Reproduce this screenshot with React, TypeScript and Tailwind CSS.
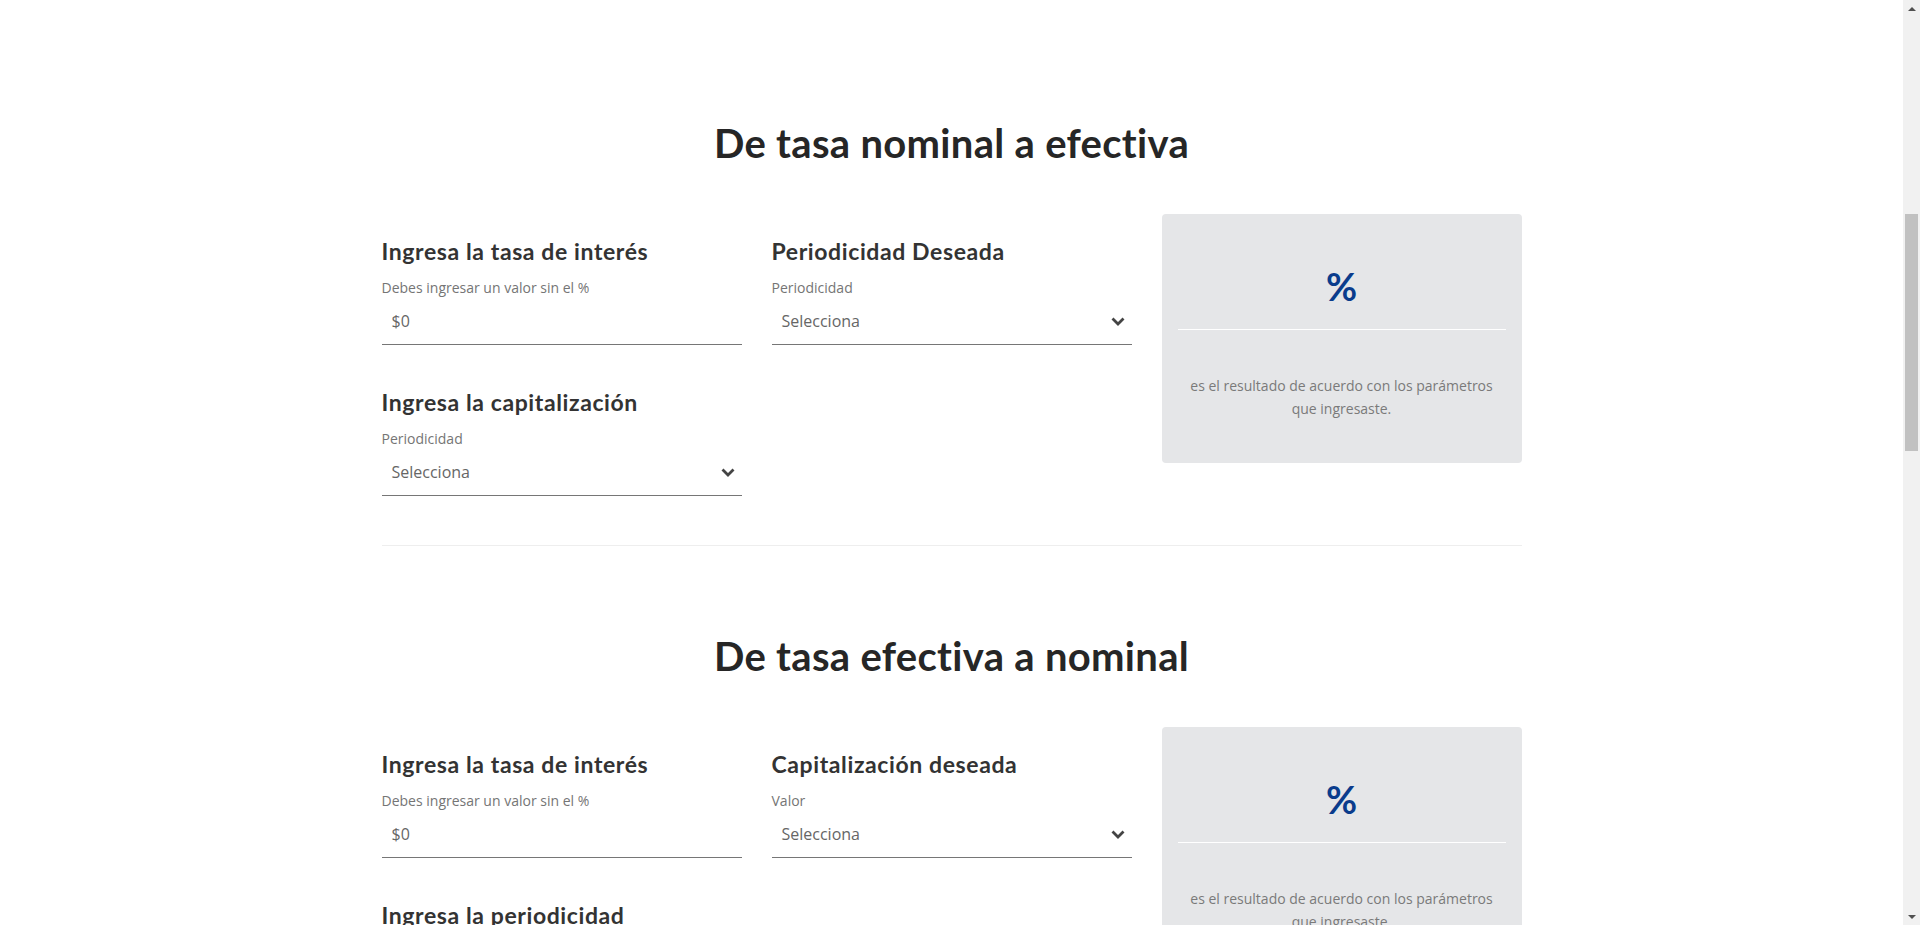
type Field = {
  label: string;
  helper: string;
  kind: "input" | "select";
};

type Section = {
  title: string;
  fields: Field[];
  side: Field;
};

const sections: Section[] = [
  {
    title: "De tasa nominal a efectiva",
    fields: [
      { label: "Ingresa la tasa de interés", helper: "Debes ingresar un valor sin el %", kind: "input" },
      { label: "Ingresa la capitalización", helper: "Periodicidad", kind: "select" },
    ],
    side: { label: "Periodicidad Deseada", helper: "Periodicidad", kind: "select" },
  },
  {
    title: "De tasa efectiva a nominal",
    fields: [
      { label: "Ingresa la tasa de interés", helper: "Debes ingresar un valor sin el %", kind: "input" },
      { label: "Ingresa la periodicidad", helper: "Periodicidad", kind: "select" },
    ],
    side: { label: "Capitalización deseada", helper: "Valor", kind: "select" },
  },
];

function Chevron() {
  return (
    <svg width="14" height="9" viewBox="0 0 14 9" className="text-[#444]">
      <path d="M1.5 1.5 L7 7 L12.5 1.5" fill="none" stroke="currentColor" strokeWidth="2.8" />
    </svg>
  );
}

function FieldBlock({ field }: { field: Field }) {
  return (
    <div className="flex flex-col">
      <h3 className="font-['Lato',sans-serif] text-[23px] font-bold leading-[28px] tracking-[0.6px] text-[#333]">
        {field.label}
      </h3>
      <p className="mt-[13px] font-['Open_Sans',sans-serif] text-[14px] leading-[20px] text-[#757575]">
        {field.helper}
      </p>
      <div className="flex h-[47px] items-center justify-between border-b border-[#767676] pl-[10px] pr-[7px] font-['Open_Sans',sans-serif] text-[16px] text-[#666]">
        <span>{field.kind === "input" ? "$0" : "Selecciona"}</span>
        {field.kind === "select" && <Chevron />}
      </div>
    </div>
  );
}

function ResultBox() {
  return (
    <div className="flex h-[249px] flex-col items-center rounded-[4px] bg-[#e5e6e8] px-4 pt-[48px]">
      <div className="font-['Lato',sans-serif] text-[38px] font-bold leading-[48px] text-[#0a3c8c]">%</div>
      <div className="mt-[19px] h-px w-full bg-white" />
      <p className="mt-[44px] text-center font-['Open_Sans',sans-serif] text-[14px] leading-[23px] text-[#7a7a7a]">
        es el resultado de acuerdo con los parámetros
        <br />
        que ingresaste.
      </p>
    </div>
  );
}

function Calculator({ section }: { section: Section }) {
  return (
    <section>
      <h2 className="text-center font-['Lato',sans-serif] text-[40px] font-bold leading-[48px] tracking-[0.3px] text-[#262626]">
        {section.title}
      </h2>
      <div className="mt-[47px] grid grid-cols-3 items-start gap-x-[30px]">
        <div className="flex flex-col gap-[43px] pt-[23px]">
          {section.fields.map((f) => (
            <FieldBlock key={f.label} field={f} />
          ))}
        </div>
        <div className="pt-[23px]">
          <FieldBlock field={section.side} />
        </div>
        <ResultBox />
      </div>
    </section>
  );
}

function Scrollbar() {
  return (
    <div className="flex h-full w-[17px] shrink-0 flex-col items-center bg-[#f1f1f1]">
      <div className="flex h-[17px] items-center justify-center">
        <div className="h-0 w-0 border-x-[4px] border-b-[4px] border-x-transparent border-b-[#505050]" />
      </div>
      <div className="mt-[197px] h-[237px] w-[13px] bg-[#c1c1c1]" />
      <div className="flex-1" />
      <div className="flex h-[17px] items-center justify-center">
        <div className="h-0 w-0 border-x-[4px] border-t-[4px] border-x-transparent border-t-[#505050]" />
      </div>
    </div>
  );
}

export default function App() {
  return (
    <div className="flex h-[925px] overflow-hidden bg-white">
      <div className="flex-1 overflow-hidden">
        <main className="mx-auto w-[1140px] pt-[119px]">
          <Calculator section={sections[0]} />
          <div className="mb-[86px] mt-[49px] h-px bg-[#eeeeee]" />
          <Calculator section={sections[1]} />
        </main>
      </div>
      <Scrollbar />
    </div>
  );
}
